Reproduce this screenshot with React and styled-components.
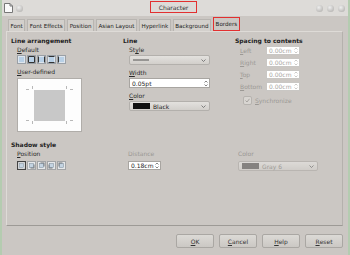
import React from "react";
import styled, { createGlobalStyle } from "styled-components";

const Global = createGlobalStyle`
  html, body { margin: 0; padding: 0; }
  body {
    background: #b4ccb0;
    font-family: "DejaVu Sans", "Liberation Sans", sans-serif;
    font-size: 6px;
    color: #2a2a2a;
  }
`;

const Window = styled.div`
  margin-left: 2px;
  width: 346px;
  height: 255px;
  background: #cbc7c3;
  display: flex;
  flex-direction: column;
`;

const TitleBar = styled.div`
  height: 16px;
  background: #dddbd8;
  display: flex;
  align-items: center;
  padding: 0 3px 0 2px;
  position: relative;
`;

const TitleText = styled.div`
  position: absolute;
  left: 148px;
  top: 1px;
  width: 47px;
  height: 12px;
  border: 1px solid #e23030;
  box-sizing: border-box;
  display: flex;
  align-items: center;
  justify-content: center;
  font-size: 6px;
  color: #333;
`;

const Round = styled.span`
  width: 7px;
  height: 7px;
  border-radius: 50%;
  background: radial-gradient(circle at 40% 35%, #eeeeee, #a9a7a4);
  margin-left: ${(p) => p.$gap || 4}px;
`;

const Spacer = styled.div`
  flex: 1;
`;

const TabStrip = styled.div`
  display: flex;
  align-items: flex-end;
  padding: 1px 0 0 6px;
  height: 14px;
  gap: 2px;
`;

const Tab = styled.div`
  padding: 0 1.5px;
  display: flex;
  align-items: center;
  font-size: 5.6px;
  background: ${(p) => (p.$active ? "#cbc7c3" : "#d3d0cc")};
  border: 1px solid ${(p) => (p.$active ? "#e23030" : "#b8b5b1")};
  border-bottom: ${(p) => (p.$active ? "1px solid #e23030" : "none")};
  height: ${(p) => (p.$active ? 14 : 12)}px;
  box-sizing: border-box;
  white-space: nowrap;
  color: #222;
`;

const Panel = styled.div`
  margin: 0 5px 0 4px;
  height: 195px;
  border: 1px solid #b5b1ad;
  border-top-color: #dedbd7;
  border-left-color: #dedbd7;
  border-bottom-color: #9d9a96;
  box-sizing: border-box;
  padding: 4px 0 0 4px;
  display: flex;
  flex-direction: column;
`;

const Row = styled.div`
  display: grid;
  grid-template-columns: 112px 112px 1fr;
`;

const Section = styled.div`
  display: flex;
  flex-direction: column;
`;

const Heading = styled.div`
  font-weight: bold;
  color: #222;
  height: 9px;
  line-height: 9px;
`;

const Label = styled.div`
  margin: ${(p) => p.$mt || 1}px 0 ${(p) => p.$mb || 1}px 6px;
  height: 8px;
  line-height: 8px;
  color: ${(p) => (p.$dim ? "#9a9793" : "#2a2a2a")};
`;

const IconRow = styled.div`
  display: flex;
  margin-left: 6px;
  gap: 1px;
`;

const Preview = styled.div`
  margin: 1px 0 0 6px;
  width: 65px;
  height: 54px;
  background: #fdfdfd;
  border: 1px solid #b0ada9;
  box-sizing: border-box;
  display: flex;
  align-items: center;
  justify-content: center;
  position: relative;
`;

const PreviewInner = styled.div`
  width: 31px;
  height: 31px;
  background: #c8c8c8;
`;

const Tick = styled.span`
  position: absolute;
  background: #b8b8b8;
  width: ${(p) => (p.$h ? 3 : 1)}px;
  height: ${(p) => (p.$h ? 1 : 3)}px;
  left: ${(p) => p.$x}px;
  top: ${(p) => p.$y}px;
`;

const Combo = styled.div`
  margin-left: 6px;
  width: ${(p) => p.$w || 81}px;
  height: 10px;
  box-sizing: border-box;
  border: 1px solid #b3b0ac;
  border-radius: 2px;
  background: linear-gradient(#e3e1de, #d2cfcb);
  display: flex;
  align-items: center;
  padding: 0 3px;
  gap: 3px;
  color: ${(p) => (p.$dim ? "#8f8c88" : "#222")};
  opacity: ${(p) => (p.$dim ? 0.75 : 1)};
`;

const Swatch = styled.span`
  width: 17px;
  height: 6px;
  background: ${(p) => p.$c};
`;

const Spin = styled.div`
  margin-left: ${(p) => p.$ml ?? 6}px;
  width: ${(p) => p.$w || 81}px;
  height: ${(p) => p.$h || 10}px;
  box-sizing: border-box;
  background: #fff;
  border: 1px solid ${(p) => (p.$dim ? "#c9c7c4" : "#a8a5a1")};
  display: flex;
  align-items: center;
  padding: 0 1px 0 2px;
  color: ${(p) => (p.$dim ? "#a8a6a3" : "#222")};
`;

const SpaceGrid = styled.div`
  display: grid;
  grid-template-columns: 26px 34px;
  row-gap: 3px;
  margin: 1px 0 0 5px;
  align-items: center;
  color: #9c9995;
`;

const CheckRow = styled.div`
  display: flex;
  align-items: center;
  gap: 3px;
  margin: 5px 0 0 8px;
  color: #9c9995;
`;

const CheckBox = styled.span`
  width: 7px;
  height: 7px;
  border: 1px solid #b6b3af;
  border-radius: 2px;
  background: #d8d5d1;
  display: flex;
  align-items: center;
  justify-content: center;
`;

const ShadowRow = styled.div`
  margin-top: 8px;
  display: grid;
  grid-template-columns: 111px 110px 1fr;
`;

const Footer = styled.div`
  display: flex;
  justify-content: flex-end;
  gap: 5px;
  padding: 8px 5px 0 0;
`;

const Button = styled.div`
  width: 38px;
  height: 14px;
  box-sizing: border-box;
  border: 1px solid #aaa7a3;
  border-radius: 2px;
  background: linear-gradient(#dcdad6, #cbc8c4);
  display: flex;
  align-items: center;
  justify-content: center;
  color: #333;
`;

const ArrowDown = () => (
  <svg width="5" height="3" viewBox="0 0 5 3" style={{ marginLeft: "auto" }}>
    <path d="M0.5 0.5 L2.5 2.5 L4.5 0.5" fill="none" stroke="#666" strokeWidth="0.8" />
  </svg>
);

const SpinArrows = ({ dim }) => (
  <svg width="4" height="7" viewBox="0 0 4 7" style={{ marginLeft: "auto" }}>
    <path d="M0.5 2.5 L2 1 L3.5 2.5 M0.5 4.5 L2 6 L3.5 4.5" fill="none" stroke={dim ? "#b8b6b3" : "#555"} strokeWidth="0.7" />
  </svg>
);

const BorderIcon = ({ sides, selected }) => (
  <svg width="9" height="9" viewBox="0 0 9 9">
    <rect x="0.5" y="0.5" width="8" height="8" fill="#dfe6ee" stroke={selected ? "#555" : "#9aa0a6"} />
    <rect x="2" y="2" width="5" height="5" fill="#b8d0e6" />
    {sides.includes("t") && <line x1="1.5" y1="1.5" x2="7.5" y2="1.5" stroke="#333" />}
    {sides.includes("b") && <line x1="1.5" y1="7.5" x2="7.5" y2="7.5" stroke="#333" />}
    {sides.includes("l") && <line x1="1.5" y1="1.5" x2="1.5" y2="7.5" stroke="#333" />}
    {sides.includes("r") && <line x1="7.5" y1="1.5" x2="7.5" y2="7.5" stroke="#333" />}
  </svg>
);

const ShadowIcon = ({ dx, dy, selected }) => (
  <svg width="9" height="9" viewBox="0 0 9 9">
    <rect x="0.5" y="0.5" width="8" height="8" fill="#e6e8ea" stroke={selected ? "#444" : "#a2a4a6"} strokeWidth={selected ? 1.2 : 1} />
    {dx !== null && <rect x={2.5 + dx} y={2.5 + dy} width="4" height="4" fill="#777" />}
    <rect x="2.5" y="2.5" width="4" height="4" fill="#c4d4e2" stroke="#7a8a98" strokeWidth="0.5" />
  </svg>
);

const SpinField = ({ value, dim, w, ml, h }) => (
  <Spin $dim={dim} $w={w} $ml={ml} $h={h}>
    {value}
    <SpinArrows dim={dim} />
  </Spin>
);

export default function App() {
  const tabs = ["Font", "Font Effects", "Position", "Asian Layout", "Hyperlink", "Background", "Borders"];
  return (
    <Window>
      <Global />
      <TitleBar>
        <svg width="9" height="10" viewBox="0 0 9 10">
          <path d="M0.5 0.5 H6 L8.5 3 V9.5 H0.5 Z" fill="#fafafa" stroke="#777" />
          <path d="M6 0.5 V3 H8.5" fill="none" stroke="#777" />
        </svg>
        <Round $gap={3} />
        <TitleText>Character</TitleText>
        <Spacer />
        <Round />
        <Round />
        <Round />
      </TitleBar>
      <TabStrip>
        {tabs.map((t) => (
          <Tab key={t} $active={t === "Borders"}>
            {t}
          </Tab>
        ))}
      </TabStrip>
      <Panel>
        <Row>
          <Section>
            <Heading>Line arrangement</Heading>
            <Label><u>D</u>efault</Label>
            <IconRow>
              <BorderIcon sides="" />
              <BorderIcon sides="tblr" />
              <BorderIcon sides="lr" />
              <BorderIcon sides="tb" />
              <BorderIcon sides="l" />
            </IconRow>
            <Label $mt={4}><u>U</u>ser-defined</Label>
            <Preview>
              <PreviewInner />
              <Tick $x={14} $y={7} />
              <Tick $x={48} $y={7} />
              <Tick $x={14} $y={42} />
              <Tick $x={48} $y={42} />
              <Tick $h $x={8} $y={10} />
              <Tick $h $x={52} $y={10} />
              <Tick $h $x={8} $y={41} />
              <Tick $h $x={52} $y={41} />
            </Preview>
          </Section>
          <Section>
            <Heading>Line</Heading>
            <Label>St<u>y</u>le</Label>
            <Combo>
              <svg width="16" height="2"><line x1="0" y1="1" x2="16" y2="1" stroke="#333" strokeWidth="0.8" /></svg>
              <ArrowDown />
            </Combo>
            <Label $mt={4}><u>W</u>idth</Label>
            <SpinField value="0.05pt" />
            <Label $mt={4}><u>C</u>olor</Label>
            <Combo>
              <Swatch $c="#111" />
              Black
              <ArrowDown />
            </Combo>
          </Section>
          <Section>
            <Heading>Spacing to contents</Heading>
            <SpaceGrid>
              <span><u>L</u>eft</span>
              <SpinField value="0.00cm" dim w={34} ml={0} h={9} />
              <span><u>R</u>ight</span>
              <SpinField value="0.00cm" dim w={34} ml={0} h={9} />
              <span><u>T</u>op</span>
              <SpinField value="0.00cm" dim w={34} ml={0} h={9} />
              <span><u>B</u>ottom</span>
              <SpinField value="0.00cm" dim w={34} ml={0} h={9} />
            </SpaceGrid>
            <CheckRow>
              <CheckBox>
                <svg width="5" height="5" viewBox="0 0 5 5">
                  <path d="M0.5 2.5 L2 4 L4.5 0.8" fill="none" stroke="#a09d99" strokeWidth="0.9" />
                </svg>
              </CheckBox>
              <span><u>S</u>ynchronize</span>
            </CheckRow>
          </Section>
        </Row>
        <ShadowRow>
          <Section>
            <Heading>Shadow style</Heading>
            <Label $mb={3}><u>P</u>osition</Label>
            <IconRow>
              <ShadowIcon dx={null} dy={0} selected />
              <ShadowIcon dx={1} dy={1} />
              <ShadowIcon dx={1} dy={-1} />
              <ShadowIcon dx={-1} dy={1} />
              <ShadowIcon dx={-1} dy={-1} />
            </IconRow>
          </Section>
          <Section>
            <Heading>&nbsp;</Heading>
            <Label $dim $mb={3}>Distance</Label>
            <SpinField value="0.18cm" w={33} h={9} />
          </Section>
          <Section>
            <Heading>&nbsp;</Heading>
            <Label $dim $mb={3}>Color</Label>
            <Combo $dim $w={80}>
              <Swatch $c="#6e6c6a" />
              Gray 6
              <ArrowDown />
            </Combo>
          </Section>
        </ShadowRow>
      </Panel>
      <Footer>
        <Button><u>O</u>K</Button>
        <Button><u>C</u>ancel</Button>
        <Button><u>H</u>elp</Button>
        <Button><u>R</u>eset</Button>
      </Footer>
    </Window>
  );
}
